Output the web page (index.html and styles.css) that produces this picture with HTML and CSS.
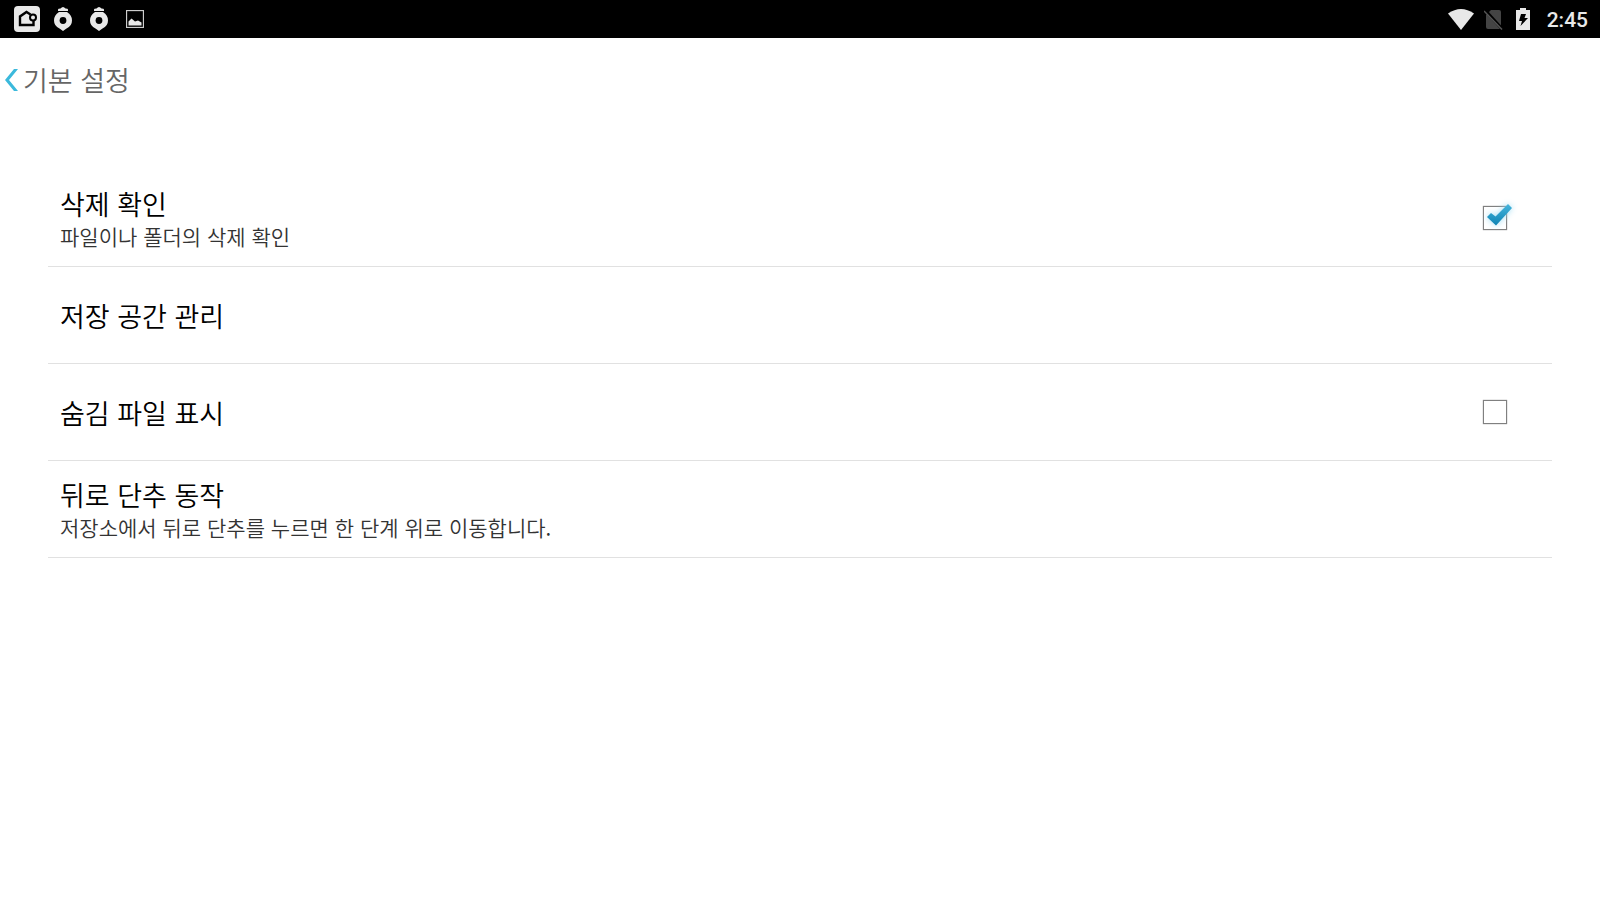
FILE: index.html
```html
<!DOCTYPE html>
<html lang="ko">
<head>
    <meta charset="UTF-8">
    <meta name="viewport" content="width=device-width, initial-scale=1.0">
    <title>기본 설정</title>
    <link rel="stylesheet" href="styles.css">
</head>
<body>

    <div class="status-bar">
        <div class="notifications">
            <svg width="26" height="26" viewBox="0 0 26 26">
                <rect width="26" height="26" rx="4" fill="#e8e8e8"/>
                <path d="M16.500 8.500L12.500 6L6 10.500V19H19.500V14" fill="none" stroke="#000" stroke-width="2.400"/>
                <circle cx="19" cy="11.500" r="3" fill="#e8e8e8" stroke="#000" stroke-width="2"/>
            </svg>
            <svg class="icon-pin" width="18" height="24" viewBox="0 0 18 24">
                <path d="M4 4V2.500Q4 1.500 6.500 1.500Q9-1.500 11.500 1.500Q14 1.500 14 2.500V4Z" fill="#e8e8e8"/>
                <path d="M5 5H13Q18 8 18 13.500Q18 19 12.500 21.500L9 24L5.500 21.500Q0 19 0 13.500Q0 8 5 5Z" fill="#e8e8e8"/>
                <circle cx="9" cy="13.500" r="3.400" fill="#000"/>
            </svg>
            <svg class="icon-pin" width="18" height="24" viewBox="0 0 18 24">
                <path d="M4 4V2.500Q4 1.500 6.500 1.500Q9-1.500 11.500 1.500Q14 1.500 14 2.500V4Z" fill="#e8e8e8"/>
                <path d="M5 5H13Q18 8 18 13.500Q18 19 12.500 21.500L9 24L5.500 21.500Q0 19 0 13.500Q0 8 5 5Z" fill="#e8e8e8"/>
                <circle cx="9" cy="13.500" r="3.400" fill="#000"/>
            </svg>
            <svg class="icon-image" width="18" height="18" viewBox="0 0 18 18">
                <rect x="0.500" y="0.500" width="17" height="17" fill="none" stroke="#ccc" stroke-width="1.300"/>
                <path d="M2.500 15.500V11.500L5.500 8.500L9 11.500L12 10.500L15.500 12.500V15.500Z" fill="#e8e8e8"/>
            </svg>
        </div>
        <div class="system">
            <svg width="26" height="21" viewBox="0 0 26 21">
                <path d="M0 4.500Q13-4.500 26 4.500L13 21Z" fill="#e8e8e8"/>
            </svg>
            <svg width="20" height="21" viewBox="0 0 20 21">
                <path d="M7 1H15Q17 1 17 3V18Q17 20 15 20H4Q2 20 2 18V6Z" fill="#444"/>
                <path d="M1 1L19 21" stroke="#000" stroke-width="3"/>
                <path d="M0 2L18 20.500" stroke="#555" stroke-width="1.500"/>
            </svg>
            <svg class="icon-battery" width="14" height="22" viewBox="0 0 14 22">
                <path d="M4 0H10V2H14V22H0V2H4Z" fill="#e8e8e8"/>
                <path d="M5 6H10L8.500 10H12L4.500 18L6 13H3Z" fill="#000"/>
            </svg>
            <span class="clock">2:45</span>
        </div>
    </div>

    <header class="title-bar">
        <a class="back" href="#">
            <svg width="13" height="22" viewBox="0 0 13 22">
                <path d="M9 0H13L4 11L13 22H9L0 11Z" fill="#3bb9dc"/>
            </svg>
            <span>기본 설정</span>
        </a>
    </header>

    <main class="settings">
        <label class="row">
            <span class="text">
                <span class="name">삭제 확인</span>
                <span class="summary">파일이나 폴더의 삭제 확인</span>
            </span>
            <span class="check">
                <input type="checkbox" checked>
                <svg class="tick" width="34" height="34" viewBox="0 0 34 34">
                    <defs>
                        <linearGradient id="tick-fill" x1="0" y1="0" x2="0" y2="1">
                            <stop offset="0" stop-color="#46b5dc"/>
                            <stop offset="1" stop-color="#0d83b4"/>
                        </linearGradient>
                    </defs>
                    <path d="M4 17L8 13L12.500 16.500L25 4L29 8L13 25.500Z" fill="url(#tick-fill)"/>
                </svg>
            </span>
        </label>
        <a class="row" href="#">
            <span class="text">
                <span class="name">저장 공간 관리</span>
            </span>
        </a>
        <label class="row">
            <span class="text">
                <span class="name">숨김 파일 표시</span>
            </span>
            <span class="check">
                <input type="checkbox">
            </span>
        </label>
        <a class="row" href="#">
            <span class="text">
                <span class="name">뒤로 단추 동작</span>
                <span class="summary">저장소에서 뒤로 단추를 누르면 한 단계 위로 이동합니다.</span>
            </span>
        </a>
    </main>

</body>
</html>
```

FILE: styles.css
```css
body {
    margin: 0;
    background: #fff;
    font-family: "Noto Sans CJK KR", sans-serif;
    color: #000;
}

a {
    color: inherit;
    text-decoration: none;
}

svg {
    display: block;
    flex: none;
}

.status-bar {
    display: flex;
    justify-content: space-between;
    height: 38px;
    padding: 0 12px 0 14px;
    background: #000;
}

.notifications,
.system {
    display: flex;
    align-items: center;
}

.notifications {
    gap: 18px;
}

.icon-pin:nth-child(2) {
    margin-left: -4px;
}

.system {
    gap: 10px;
}

.icon-battery {
    margin: 0 7px 0 2px;
}

.clock {
    padding-top: 2px;
    font-family: Roboto, sans-serif;
    font-size: 21px;
    font-weight: 500;
    color: #e8e8e8;
}

.title-bar {
    display: flex;
    height: 84px;
}

.back {
    display: flex;
    align-items: center;
    gap: 5px;
    padding-left: 5px;
    font-size: 27px;
    line-height: 34px;
    font-weight: 350;
    color: #666;
}

.settings {
    margin: 48px 48px 0;
}

.row {
    display: flex;
    align-items: center;
    justify-content: space-between;
    box-sizing: border-box;
    height: 97px;
    padding: 0 45px 0 12px;
    border-bottom: 1px solid #e1e1e1;
}

.text {
    padding-top: 2px;
}

.name,
.summary {
    display: block;
}

.name {
    font-size: 27px;
    line-height: 34px;
    font-weight: 350;
}

.summary {
    font-size: 21px;
    line-height: 30px;
    font-weight: 350;
    color: #333;
}

.check {
    position: relative;
}

.check input {
    display: block;
    appearance: none;
    width: 24px;
    height: 24px;
    margin: 0;
    border: 1px solid #808080;
    box-shadow: 0 0 1px #808080;
}

/* the tick runs over the corner of its box */
.tick {
    position: absolute;
    top: -6px;
    left: 0;
    filter: drop-shadow(0 0 3px #9fdcf3);
}
```
